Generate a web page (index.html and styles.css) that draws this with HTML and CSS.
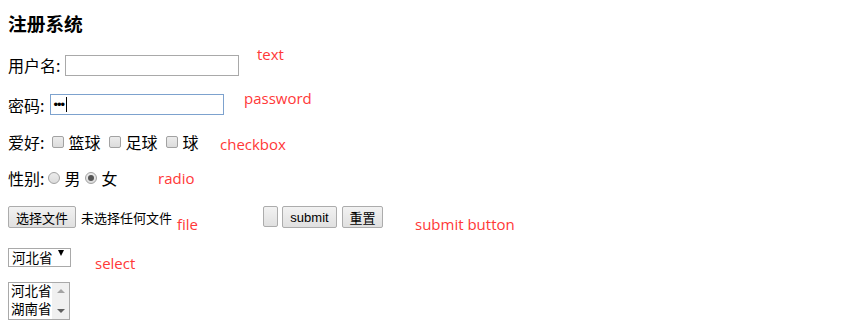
FILE: index.html
```html
<!DOCTYPE html>
<html>
  <head>
    <meta charset="utf-8">
    <title>注册系统</title>
    <link rel="stylesheet" href="styles.css">
  </head>
  <body>
    <div class="page">
      <h3 class="title">注册系统</h3>
      <form class="form">
        <div class="row row-user">
          <label for="user">用户名:</label>
          <input type="text" id="user" class="field">
        </div>
        <div class="row row-pwd">
          <label for="pwd">密码:</label>
          <input type="password" id="pwd" class="field field-focus" value="abc">
        </div>
        <div class="row row-hobby">
          <span class="caption">爱好:</span>
          <label class="opt"><input type="checkbox" class="check">篮球</label>
          <label class="opt"><input type="checkbox" class="check">足球</label>
          <label class="opt"><input type="checkbox" class="check">球</label>
        </div>
        <div class="row row-sex">
          <span class="caption">性别:</span>
          <label class="opt opt-radio"><input type="radio" name="sex" class="radio">男</label>
          <label class="opt opt-radio"><input type="radio" name="sex" class="radio" checked>女</label>
        </div>
        <div class="row row-file">
          <span class="file-input">
            <button type="button" class="btn btn-file">选择文件</button>
            <span class="file-name">未选择任何文件</span>
          </span>
          <button type="button" class="btn btn-empty"></button>
          <button type="submit" class="btn btn-submit">submit</button>
          <button type="reset" class="btn btn-reset">重置</button>
        </div>
        <div class="row row-select">
          <span class="select-wrap">
            <select class="select">
              <option>河北省</option>
              <option>湖南省</option>
            </select>
          </span>
        </div>
        <div class="listbox">
          <div class="listbox-options">
            <div>河北省</div>
            <div>湖南省</div>
          </div>
          <div class="listbox-scroll">
            <span class="arrow-up"></span>
            <span class="arrow-down"></span>
          </div>
        </div>
      </form>

      <!-- anotações em vermelho -->
      <span class="note note-text">text</span>
      <span class="note note-password">password</span>
      <span class="note note-checkbox">checkbox</span>
      <span class="note note-radio">radio</span>
      <span class="note note-file">file</span>
      <span class="note note-submit">submit button</span>
      <span class="note note-select">select</span>
      <span class="caret"></span>
    </div>
  </body>
</html>
```

FILE: styles.css
```css
body {
  margin: 0;
  font-family: "Noto Sans CJK SC", sans-serif;
  font-size: 16px;
  color: #000;
  background: #fff;
}
.page {
  position: relative;
  height: 335px;
  padding: 0 8px;
  overflow: hidden;
}
.title {
  margin: 0 0 10px;
  padding-top: 11px;
  font-size: 18.72px;
  line-height: 24px;
  font-weight: bold;
}
.form {
  display: flex;
  flex-direction: column;
}
.row {
  display: flex;
  align-items: center;
}
.row-user { height: 40px; }
.row-pwd { height: 39px; }
.row-hobby { height: 36px; }
.row-sex { height: 36px; }
.row-file { height: 42px; }
.row-select { height: 36px; }

.row label[for] {
  margin-right: 5px;
}
.row-pwd label[for] {
  margin-right: 6px;
}
.field {
  box-sizing: border-box;
  width: 174px;
  height: 21px;
  margin: 0;
  padding: 1px 2px;
  border: 1px solid #a9a9a9;
  font-family: "Liberation Sans", sans-serif;
  font-size: 13px;
  outline: none;
}
.field-focus {
  border-color: #7da2ce;
  letter-spacing: -1px;
}
.caption {
  margin-right: 8px;
}
.row-sex .caption {
  margin-right: 4px;
}
.opt {
  display: flex;
  align-items: center;
  margin-right: 9px;
}
.opt-radio {
  margin-right: 5px;
}
.check,
.radio {
  appearance: none;
  box-sizing: border-box;
  width: 12px;
  height: 12px;
  margin: 0 4px 0 0;
  border: 1px solid #a2a2a2;
  background: linear-gradient(#ececec, #dcdcdc);
}
.check {
  border-radius: 2px;
}
.radio {
  border-radius: 50%;
  position: relative;
}
.radio:checked::after {
  content: "";
  position: absolute;
  left: 2px;
  top: 2px;
  width: 6px;
  height: 6px;
  border-radius: 50%;
  background: #555;
}
.btn {
  box-sizing: border-box;
  height: 22px;
  margin: 0 5px 0 0;
  padding: 0 6px;
  border: 1px solid #acacac;
  border-radius: 2px;
  background: linear-gradient(#f2f2f2, #e0e0e0);
  font-family: "Liberation Sans", "Noto Sans CJK SC", sans-serif;
  font-size: 13px;
  color: #000;
}
.file-input {
  display: flex;
  align-items: center;
  width: 255px;
}
.btn-file {
  width: 68px;
  padding: 0;
}
.file-name {
  font-size: 13px;
}
.btn-empty {
  width: 15px;
  height: 21px;
  margin-right: 4px;
  position: relative;
  top: -1px;
}
.btn-submit {
  width: 55px;
  padding: 0;
}
.btn-reset {
  width: 41px;
  padding: 0;
}
.select-wrap {
  position: relative;
  display: inline-block;
}
.select-wrap::after {
  content: "";
  position: absolute;
  left: 50px;
  top: 6px;
  border-left: 3px solid transparent;
  border-right: 3px solid transparent;
  border-top: 6px solid #000;
}
.select {
  appearance: none;
  box-sizing: border-box;
  width: 63px;
  height: 19px;
  margin: 0;
  padding: 0 0 0 3px;
  border: 1px solid #a9a9a9;
  border-radius: 0;
  background: #fff;
  font-family: "Noto Sans CJK SC", sans-serif;
  font-size: 13.5px;
  line-height: 17px;
}
.listbox {
  display: flex;
  box-sizing: border-box;
  width: 62px;
  height: 38px;
  margin-top: 8px;
  border: 1px solid #a9a9a9;
}
.listbox-options {
  flex: 1;
  min-width: 0;
  padding: 0 0 0 2px;
  font-family: "Liberation Sans", "Noto Sans CJK SC", sans-serif;
  font-size: 13.5px;
  line-height: 18px;
  white-space: nowrap;
  overflow: hidden;
}
.listbox-scroll {
  flex: none;
  width: 17px;
  display: flex;
  flex-direction: column;
  justify-content: space-between;
  align-items: center;
  padding: 6px 0;
  background: #f0f0f0;
  box-sizing: border-box;
}
.arrow-up {
  border-left: 4px solid transparent;
  border-right: 4px solid transparent;
  border-bottom: 4px solid #a3a3a3;
}
.arrow-down {
  border-left: 4px solid transparent;
  border-right: 4px solid transparent;
  border-top: 4px solid #606060;
}

.note {
  position: absolute;
  font-family: "Open Sans", sans-serif;
  font-size: 15px;
  line-height: 20px;
  color: #ff3838;
  white-space: nowrap;
}
.note-text { left: 257px; top: 44px; }
.note-password { left: 244px; top: 88px; }
.note-checkbox { left: 220px; top: 134px; }
.note-radio { left: 158px; top: 168px; }
.note-file { left: 177px; top: 214px; }
.note-submit { left: 415px; top: 214px; }
.note-select { left: 95px; top: 253px; }
.caret {
  position: absolute;
  left: 66px;
  top: 97px;
  width: 1px;
  height: 15px;
  background: #000;
}
```
